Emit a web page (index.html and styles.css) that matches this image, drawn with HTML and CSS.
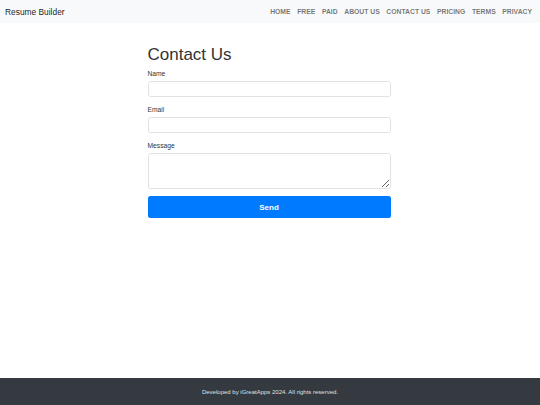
FILE: index.html
```html
<!DOCTYPE html>
<html lang="en">
<head>
<meta charset="utf-8">
<title>Contact Us - Resume Builder</title>
<link rel="stylesheet" href="styles.css">
</head>
<body>
<div class="page">
  <nav class="navbar">
    <a class="brand" href="#">Resume Builder</a>
    <ul class="nav">
      <li><a href="#">Home</a></li>
      <li><a href="#">Free</a></li>
      <li><a href="#">Paid</a></li>
      <li><a href="#">About Us</a></li>
      <li><a href="#">Contact Us</a></li>
      <li><a href="#">Pricing</a></li>
      <li><a href="#">Terms</a></li>
      <li><a href="#">Privacy</a></li>
    </ul>
  </nav>
  <main class="main">
    <form class="contact">
      <h2 class="title">Contact Us</h2>
      <div class="group">
        <label class="label" for="name">Name</label>
        <input class="field" id="name" type="text">
      </div>
      <div class="group">
        <label class="label" for="email">Email</label>
        <input class="field" id="email" type="email">
      </div>
      <div class="group">
        <label class="label" for="message">Message</label>
        <textarea class="field area" id="message"></textarea>
      </div>
      <button class="send" type="button">Send</button>
    </form>
  </main>
  <footer class="footer">Developed by iGreatApps 2024. All rights reserved.</footer>
</div>
</body>
</html>
```
FILE: styles.css
```css
* { box-sizing: border-box; }
html, body { margin: 0; padding: 0; }
body {
  font-family: "Liberation Sans", Arial, sans-serif;
  color: #212529;
  background: #fff;
}
.page {
  min-height: 405px;
  display: flex;
  flex-direction: column;
}
.navbar {
  height: 23px;
  background: #f8f9fa;
  display: flex;
  align-items: center;
  justify-content: space-between;
  padding: 0 5px 0 5px;
}
.brand {
  font-size: 8.4px;
  color: rgba(0,0,0,.9);
  text-decoration: none;
  margin-top: 1px;
}
.nav {
  list-style: none;
  margin: 0;
  padding: 0;
  display: flex;
}
.nav a {
  display: block;
  padding: 0 3.3px;
  font-size: 6.8px;
  font-weight: bold;
  text-transform: uppercase;
  color: rgba(0,0,0,.55);
  text-decoration: none;
}
.nav li:last-child a { padding-right: 3px; }
.main {
  flex: 1;
  display: flex;
  justify-content: center;
}
.contact {
  width: 243px;
  margin-left: -2px;
  padding-top: 22px;
}
.title {
  margin: 0 0 5px;
  font-size: 17px;
  font-weight: normal;
  line-height: 1.2;
  color: #333;
}
.group { margin-bottom: 9px; }
.label {
  display: block;
  font-size: 6.7px;
  margin-bottom: 4px;
  color: #333;
}
.field {
  display: block;
  width: 100%;
  height: 16px;
  border: 1px solid #dfe2e6;
  border-radius: 2.5px;
  background: #fff;
  font: inherit;
  padding: 0;
}
.area {
  height: 36px;
  resize: vertical;
}
.send {
  display: block;
  width: 100%;
  height: 22px;
  border: none;
  border-radius: 2.5px;
  background: #007bff;
  color: #fff;
  font-family: "Liberation Sans", Arial, sans-serif;
  font-size: 8px;
  font-weight: bold;
  margin-top: -2px;
}
.footer {
  height: 27px;
  background: #343a40;
  color: #dee2e6;
  font-size: 6px;
  display: flex;
  align-items: center;
  justify-content: center;
}
```
